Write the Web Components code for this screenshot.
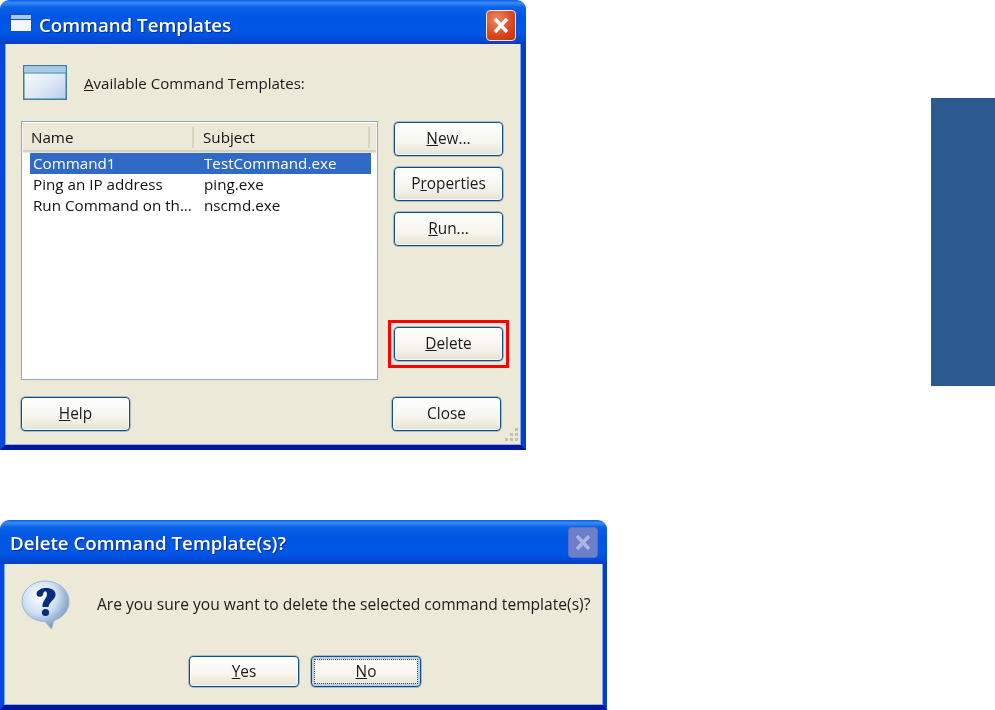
<!DOCTYPE html>
<html>
<head>
<meta charset="utf-8">
<title>Command Templates</title>
<style>
html, body { margin: 0; padding: 0; background: #fff; }
body { position: relative; width: 995px; height: 710px; overflow: hidden; font-family: "Open Sans", "Liberation Sans", sans-serif; }
xp-window.main { left: 0; top: 0; width: 526px; height: 450px; }
xp-window.confirm { left: 0; top: 520px; width: 607px; height: 190px; }
</style>
</head>
<body>

<xp-window class="main" heading="Command Templates" icon>
  <command-templates></command-templates>
</xp-window>

<xp-window class="confirm" heading="Delete Command Template(s)?" disabled-close>
  <delete-confirm></delete-confirm>
</xp-window>

<side-tab></side-tab>

<script>
customElements.define('xp-window', class extends HTMLElement {
  constructor() {
    super();
    this.attachShadow({ mode: 'open' });
    const icon = this.hasAttribute('icon') ? `
      <svg class="icon" width="22" height="18" viewBox="0 0 22 18">
        <rect x="0" y="0" width="22" height="18" fill="#1b4fa8"/>
        <rect x="1" y="1" width="20" height="4" fill="#a9c8ee"/>
        <rect x="1" y="6" width="20" height="11" fill="#f2f6fd"/>
      </svg>` : '';
    this.shadowRoot.innerHTML = `
<style>
:host { display: flex; flex-direction: column; position: absolute; box-sizing: border-box; filter: blur(.35px); }
.bar {
  flex: none; display: flex; align-items: center; box-sizing: border-box;
  height: 44px; padding: 7px 10px 1px 10px; gap: 7px;
  border-radius: 9px 9px 0 0;
  background: linear-gradient(#0a5fe4 0, #3b8cf5 3px, #0b62e8 7px, #0056e2 16px, #0058e8 32px, #0349d8 40px, #0a3cb8 44px);
}
.title { flex: 1; color: #fff; font: 600 18.7px/1 "Open Sans", sans-serif; text-shadow: 1px 1px 1px #0c2a90; white-space: nowrap; }
.icon { flex: none; margin-top: -4px; }
.close {
  flex: none; width: 30px; height: 31px; box-sizing: border-box;
  border: 1px solid #f4e6dc; border-radius: 4px;
  background: radial-gradient(circle at 35% 30%, #ee8a66, #d8451c 60%, #c0340f);
}
.close svg { display: block; }
:host([disabled-close]) .bar { padding-right: 9px; }
:host([disabled-close]) .title { margin-top: -3px; }
:host([disabled-close]) .close { background: #6d7fc8; border-color: #5a70c4; margin-top: -5px; }
.frame {
  flex: 1; display: flex; min-height: 0;
  background: #ece9d8;
  border: solid #0552e0; border-width: 0 5px 5px 5px;
  border-bottom-color: #00169c;
  border-left-color: #0548dc; border-right-color: #0040c8;
  box-shadow: inset 0 -1px 0 #8fb0e8, inset 1px 0 0 #7fa4e8, inset -1px 0 0 #7fa4e8;
}
:host([disabled-close]) .frame { border-width: 0 4px 5px 4px; }
::slotted(*) { flex: 1; min-width: 0; }
</style>
<div class="bar">${icon}<span class="title"></span><div class="close">
  <svg width="28" height="29" viewBox="0 0 28 29"><path d="M8 8 L20 21 M20 8 L8 21" stroke="${this.hasAttribute('disabled-close') ? '#aab6e4' : '#fff'}" stroke-width="3.4" fill="none"/></svg>
</div></div>
<div class="frame"><slot></slot></div>`;
    this.shadowRoot.querySelector('.title').textContent = this.getAttribute('heading');
  }
});

customElements.define('xp-button', class extends HTMLElement {
  constructor() {
    super();
    this.attachShadow({ mode: 'open' });
    this.shadowRoot.innerHTML = `
<style>
:host { display: block; box-sizing: border-box; width: 109px; height: 34px; }
.b {
  box-sizing: border-box; width: 100%; height: 100%;
  display: flex; align-items: center; justify-content: center;
  border: 1px solid #10508a; border-radius: 4px;
  box-shadow: inset 0 0 0 1px rgba(255,255,255,.7), 0 0 0 .5px rgba(20,80,140,.6);
  background: linear-gradient(#fff, #f6f5ee 60%, #e6e3d4);
  color: #1a1a1a; font: 15.4px/1 "Open Sans", sans-serif;
}
:host([focused]) .b { box-shadow: inset 0 0 0 2px #bcd0ea, 0 0 0 .5px rgba(20,80,140,.6); }
:host([focused]) .d { border: 1px dotted #444; }
.d { flex: 1; align-self: stretch; margin: 2px; padding-bottom: var(--text-lift, 1px); box-sizing: border-box; display: flex; align-items: center; justify-content: center; border: 1px solid transparent; }
</style>
<div class="b"><div class="d"><span><slot></slot></span></div></div>`;
  }
});

customElements.define('xp-listview', class extends HTMLElement {
  constructor() {
    super();
    this.attachShadow({ mode: 'open' });
    this.shadowRoot.innerHTML = `
<style>
:host { display: flex; flex-direction: column; box-sizing: border-box; background: #fff; border: 1px solid #8ea8c4; padding: 1px 1px 0; font: 15.2px/1 "Open Sans", sans-serif; color: #111; }
.head { flex: none; display: grid; grid-template-columns: 171px 176px; height: 29px; padding-top: 2px; box-sizing: border-box; background: #ece9d8; border-bottom: 2px solid #d6d2bf; align-items: center; box-shadow: 0 1px 1px #e6e3d6; }
.head span { padding-left: 9px; position: relative; }
.head span:first-child { padding-left: 8px; }
.head span::after { content: ""; position: absolute; right: 0; top: -3px; height: 21px; width: 2px; background: #d8d4c2; }
.rows { padding: 1px 5px 0 7px; display: flex; flex-direction: column; }
</style>
<div class="head"><span>Name</span><span>Subject</span></div>
<div class="rows"><slot></slot></div>`;
  }
});

customElements.define('xp-listrow', class extends HTMLElement {
  constructor() {
    super();
    this.attachShadow({ mode: 'open' });
    this.shadowRoot.innerHTML = `
<style>
:host { display: grid; grid-template-columns: 171px 1fr; height: 21px; align-items: center; white-space: nowrap; padding-left: 3px; }
:host([selected]) { background: #316ac5; color: #fff; }
</style>
<span class="n"></span><span class="s"></span>`;
    this.shadowRoot.querySelector('.n').textContent = this.getAttribute('name');
    this.shadowRoot.querySelector('.s').textContent = this.getAttribute('subject');
  }
});

customElements.define('command-templates', class extends HTMLElement {
  constructor() {
    super();
    this.attachShadow({ mode: 'open' });
    this.shadowRoot.innerHTML = `
<style>
:host { display: flex; flex-direction: column; position: relative; box-sizing: border-box; padding: 21px 17px 14px 16px; font: 15.05px/1 "Open Sans", sans-serif; color: #1a1a1a; }
.top { display: flex; align-items: center; gap: 17px; height: 35px; padding-left: 2px; }
.top span { padding-top: 2px; }
.mid { display: flex; margin-top: 21px; flex: 1; min-height: 0; }
xp-listview { width: 357px; height: 259px; }
.side { display: flex; flex-direction: column; gap: 11px; margin-left: 16px; padding-top: 1px; height: 259px; box-sizing: border-box; }
.mark { margin: auto -6px 12px; border: 3px solid #f00; padding: 4px 3px; }
.foot { display: flex; justify-content: space-between; margin-top: 17px; padding-right: 3px; }
.grip { position: absolute; right: 1px; bottom: 2px; }
</style>
<div class="top">
  <svg width="44" height="35" viewBox="0 0 44 35">
    <defs><linearGradient id="w" x1="0" y1="0" x2="1" y2="1"><stop offset="0" stop-color="#fff"/><stop offset=".55" stop-color="#dfe8f6"/><stop offset="1" stop-color="#b9cee9"/></linearGradient></defs>
    <rect x=".75" y=".75" width="42.5" height="33.5" fill="url(#w)" stroke="#3a7f9e" stroke-width="1.5"/>
    <rect x="1.5" y="1.5" width="41" height="6" fill="#a8c8ec"/>
    <path d="M1 8 H43" stroke="#3a7f9e" stroke-width="1"/>
  </svg>
  <span><u>A</u>vailable Command Templates:</span>
</div>
<div class="mid">
  <xp-listview>
    <xp-listrow selected name="Command1" subject="TestCommand.exe"></xp-listrow>
    <xp-listrow name="Ping an IP address" subject="ping.exe"></xp-listrow>
    <xp-listrow name="Run Command on th..." subject="nscmd.exe"></xp-listrow>
  </xp-listview>
  <div class="side">
    <xp-button><u>N</u>ew...</xp-button>
    <xp-button>P<u>r</u>operties</xp-button>
    <xp-button><u>R</u>un...</xp-button>
    <div class="mark"><xp-button><u>D</u>elete</xp-button></div>
  </div>
</div>
<div class="foot">
  <xp-button><u>H</u>elp</xp-button>
  <xp-button>Close</xp-button>
</div>
<svg class="grip" width="16" height="16" viewBox="0 0 16 16" fill="#c4c0ac">
  <rect x="11" y="1" width="3" height="3"/><rect x="6" y="6" width="3" height="3"/><rect x="11" y="6" width="3" height="3"/>
  <rect x="1" y="11" width="3" height="3"/><rect x="6" y="11" width="3" height="3"/><rect x="11" y="11" width="3" height="3"/>
</svg>`;
  }
});

customElements.define('delete-confirm', class extends HTMLElement {
  constructor() {
    super();
    this.attachShadow({ mode: 'open' });
    this.shadowRoot.innerHTML = `
<style>
:host { display: flex; flex-direction: column; box-sizing: border-box; padding: 16px 0 18px 17px; font: 15.6px/1 "Open Sans", sans-serif; color: #1a1a1a; }
.msg { display: flex; align-items: center; gap: 27px; height: 50px; white-space: nowrap; }
.btns { display: flex; gap: 12px; margin: 26px 0 0 168px; }
xp-button { height: 31px; width: 110px; --text-lift: 0px; }
</style>
<div class="msg">
  <svg width="49" height="50" viewBox="0 0 49 50">
    <defs><radialGradient id="q" cx=".38" cy=".32" r=".72"><stop offset="0" stop-color="#fff"/><stop offset=".5" stop-color="#cfe0f4"/><stop offset="1" stop-color="#6f8fb6"/></radialGradient></defs>
    <path d="M24.5 1 C37.5 1 48 10 48 21.5 C48 31 41 38 33 40.5 L30.5 49 L24 41.5 C11 41.5 1 32 1 21.5 C1 10 11.5 1 24.5 1 Z" fill="url(#q)" stroke="#9fb6d2" stroke-width="1"/>
    <path d="M15.5 13.5 C17 6.5 33 6 34.5 13.5 C35.5 19.5 28 21 27.5 27 L21.5 27 C21 20 26.5 18.5 26 13.5 C25.5 10 22.5 10.5 22 14.5 C21.5 18 15 17.5 15.5 13.5 Z" fill="#0a2a7a"/>
    <circle cx="24.5" cy="32.5" r="3.6" fill="#0a2a7a"/>
  </svg>
  <span>Are you sure you want to delete the selected command template(s)?</span>
</div>
<div class="btns">
  <xp-button><u>Y</u>es</xp-button>
  <xp-button focused><u>N</u>o</xp-button>
</div>`;
  }
});

customElements.define('side-tab', class extends HTMLElement {
  constructor() {
    super();
    this.attachShadow({ mode: 'open' });
    this.shadowRoot.innerHTML = `<style>:host { display: block; position: absolute; left: 931px; top: 98px; width: 64px; height: 288px; background: #2a5a8f; }</style>`;
  }
});
</script>
</body>
</html>
